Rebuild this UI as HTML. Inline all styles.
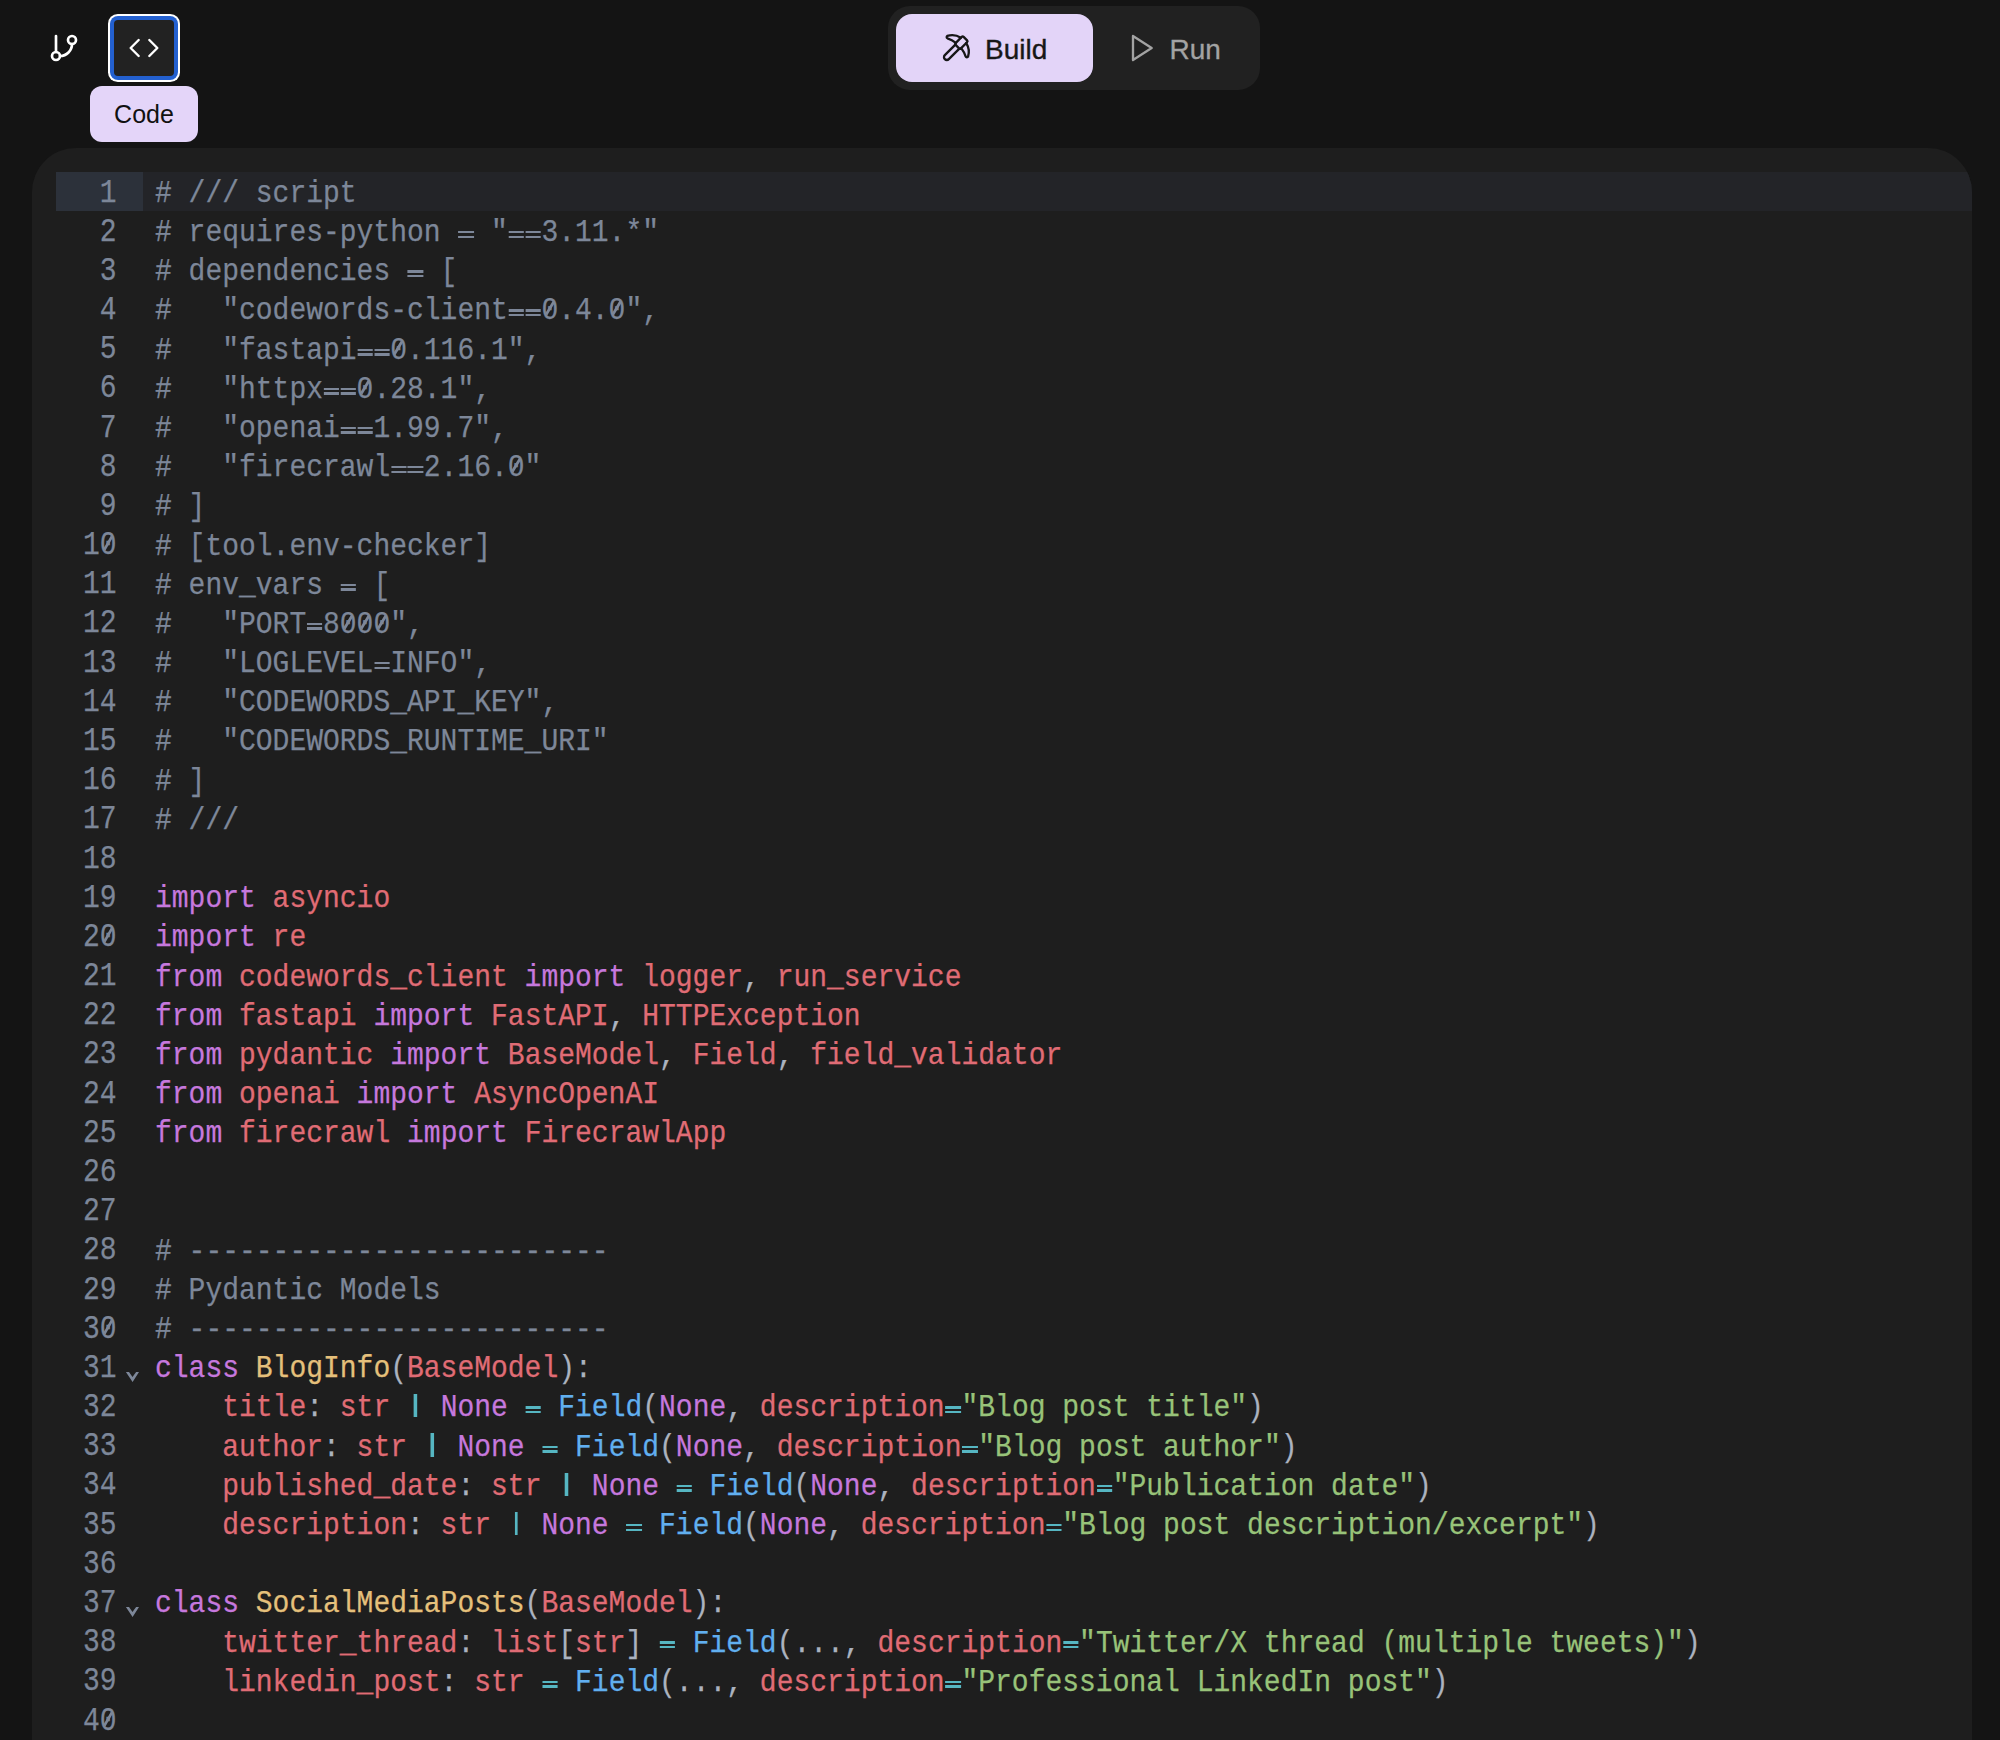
<!DOCTYPE html>
<html><head><meta charset="utf-8"><style>
html,body{margin:0;padding:0;background:#141414;}
body{width:2000px;height:1740px;overflow:hidden;background:#141414;position:relative;font-family:"Liberation Sans",sans-serif;}
.abs{position:absolute;}
#panel{position:absolute;left:32px;top:148px;width:1940px;height:1700px;background:#1e1e1e;border-radius:44px;overflow:hidden;}
#al{position:absolute;left:111px;top:24px;width:1829px;height:39.2px;background:#232428;}
#ag{position:absolute;left:24px;top:24px;width:87px;height:39.2px;background:#2c313a;}
.ln{position:absolute;left:123px;height:39.18px;line-height:39.18px;white-space:pre;font-family:"Liberation Mono",monospace;font-size:31.5px;color:#abb2bf;transform:scaleX(0.88874);transform-origin:0 0;-webkit-text-stroke:0.25px;}
.num{position:absolute;left:24px;width:71.32px;text-align:right;height:39.18px;line-height:39.18px;font-family:"Liberation Mono",monospace;font-size:33px;color:#7d8799;transform:scaleX(0.84835);transform-origin:0 0;-webkit-text-stroke:0.25px;}
.fold{position:absolute;left:92px;}
b{font-weight:normal;}
.bar{color:transparent;-webkit-text-stroke:0;position:relative;} .bar::after{content:'';position:absolute;left:7.65px;top:3.8px;width:3.83px;height:23.2px;background:#56b6c2;}
i.z{font-style:normal;position:relative;} i.eq{font-style:normal;position:relative;color:transparent;-webkit-text-stroke:0;} .c i.eq::before,.c i.eq::after{background:#7d8799;} i.eq::before,i.eq::after{content:'';position:absolute;left:0.90px;width:17.44px;height:2.4px;background:#56b6c2;} i.eq::before{top:15.9px;} i.eq::after{top:20.5px;} .num i.z::after{top:8.20px !important;} i.z::after{content:'';position:absolute;left:50%;top:6.90px;width:3.26px;height:16.0px;margin-left:-1.63px;background:currentColor;transform:rotate(34.00deg);}
.c{color:#7d8799} .k{color:#c678dd} .v{color:#e06c75} .t{color:#e5c07b} .f{color:#61afef} .s{color:#98c379} .o{color:#56b6c2} .p{color:#abb2bf}
#codebtn{position:absolute;left:114px;top:20px;width:60px;height:56px;box-sizing:border-box;background:#222222;border-radius:4px;box-shadow:0 0 0 4px #2360d0, 0 0 0 6px #ffffff;}
#tip{position:absolute;left:90px;top:86px;width:108px;height:56px;background:#e4d5f9;border-radius:12px;color:#111;font-size:25px;line-height:57px;text-align:center;}
#pill{position:absolute;left:888px;top:6px;width:372px;height:84px;background:#212121;border-radius:22px;}
#build{position:absolute;left:896px;top:14px;width:197px;height:68px;background:#e3d4f8;border-radius:16px;}
#buildtxt{position:absolute;left:985px;top:16px;-webkit-text-stroke:0.35px #171717;height:68px;line-height:68px;font-size:28px;color:#171717;}
#runtxt{position:absolute;left:1169.5px;top:16px;-webkit-text-stroke:0.3px #a3a3a3;height:68px;line-height:68px;font-size:28px;color:#a3a3a3;}
</style></head><body>
<svg class="abs" style="left:48px;top:32px" width="32" height="32" viewBox="0 0 24 24" fill="none" stroke="#ffffff" stroke-width="2" stroke-linecap="round" stroke-linejoin="round"><line x1="6" x2="6" y1="3" y2="15"/><circle cx="18" cy="6" r="3"/><circle cx="6" cy="18" r="3"/><path d="M18 9a9 9 0 0 1-9 9"/></svg>
<div id="codebtn"></div>
<svg class="abs" style="left:128px;top:32px" width="32" height="32" viewBox="0 0 24 24" fill="none" stroke="#ffffff" stroke-width="1.8" stroke-linecap="round" stroke-linejoin="round"><polyline points="16 18 22 12 16 6"/><polyline points="8 6 2 12 8 18"/></svg>
<div id="tip">Code</div>
<div id="pill"></div>
<div id="build"></div>
<svg class="abs" style="left:940px;top:32px" width="32" height="32" viewBox="0 0 24 24" fill="none" stroke="#171717" stroke-width="1.75" stroke-linecap="round" stroke-linejoin="round"><path d="M14.531 12.469 6.619 20.38a1 1 0 1 1-3-3l7.912-7.912"/><path d="M15.686 4.314A12.5 12.5 0 0 0 5.461 2.958 1 1 0 0 0 5.58 4.71a22 22 0 0 1 6.318 3.393"/><path d="M17.7 3.7a1 1 0 0 0-1.4 0l-4.6 4.6a1 1 0 0 0 0 1.4l2.6 2.6a1 1 0 0 0 1.4 0l4.6-4.6a1 1 0 0 0 0-1.4z"/><path d="M19.686 8.314a12.501 12.501 0 0 1 1.356 10.225 1 1 0 0 1-1.751-.119 22 22 0 0 0-3.393-6.319"/></svg>
<div id="buildtxt">Build</div>
<svg class="abs" style="left:1125px;top:32px" width="32" height="32" viewBox="0 0 24 24" fill="none" stroke="#a3a3a3" stroke-width="1.75" stroke-linecap="round" stroke-linejoin="round"><polygon points="6 3 20 12 6 21 6 3"/></svg>
<div id="runtxt">Run</div>
<div id="panel">
<div id="al"></div><div id="ag"></div>
<div class="num" style="top:25.50px">1</div><div class="num" style="top:64.68px">2</div><div class="num" style="top:103.86px">3</div><div class="num" style="top:143.04px">4</div><div class="num" style="top:182.22px">5</div><div class="num" style="top:221.40px">6</div><div class="num" style="top:260.58px">7</div><div class="num" style="top:299.76px">8</div><div class="num" style="top:338.94px">9</div><div class="num" style="top:378.12px">1<i class="z">0</i></div><div class="num" style="top:417.30px">11</div><div class="num" style="top:456.48px">12</div><div class="num" style="top:495.66px">13</div><div class="num" style="top:534.84px">14</div><div class="num" style="top:574.02px">15</div><div class="num" style="top:613.20px">16</div><div class="num" style="top:652.38px">17</div><div class="num" style="top:691.56px">18</div><div class="num" style="top:730.74px">19</div><div class="num" style="top:769.92px">2<i class="z">0</i></div><div class="num" style="top:809.10px">21</div><div class="num" style="top:848.28px">22</div><div class="num" style="top:887.46px">23</div><div class="num" style="top:926.64px">24</div><div class="num" style="top:965.82px">25</div><div class="num" style="top:1005.00px">26</div><div class="num" style="top:1044.18px">27</div><div class="num" style="top:1083.36px">28</div><div class="num" style="top:1122.54px">29</div><div class="num" style="top:1161.72px">3<i class="z">0</i></div><div class="num" style="top:1200.90px">31</div><div class="num" style="top:1240.08px">32</div><div class="num" style="top:1279.26px">33</div><div class="num" style="top:1318.44px">34</div><div class="num" style="top:1357.62px">35</div><div class="num" style="top:1396.80px">36</div><div class="num" style="top:1435.98px">37</div><div class="num" style="top:1475.16px">38</div><div class="num" style="top:1514.34px">39</div><div class="num" style="top:1553.52px">4<i class="z">0</i></div>
<svg class="fold" style="top:1222.00px" width="18" height="14" viewBox="0 0 18 14"><polygon points="1.9,1.9 5.0,1.9 8.5,6.9 12.1,1.9 15.0,1.9 8.6,12" fill="#7d8799"/></svg><svg class="fold" style="top:1457.08px" width="18" height="14" viewBox="0 0 18 14"><polygon points="1.9,1.9 5.0,1.9 8.5,6.9 12.1,1.9 15.0,1.9 8.6,12" fill="#7d8799"/></svg>
<div class="ln" style="top:25.90px"><b class="c"># /// script</b></div><div class="ln" style="top:65.08px"><b class="c"># requires-python <i class="eq">=</i> &quot;<i class="eq">=</i><i class="eq">=</i>3.11.*&quot;</b></div><div class="ln" style="top:104.26px"><b class="c"># dependencies <i class="eq">=</i> [</b></div><div class="ln" style="top:143.44px"><b class="c">#   &quot;codewords-client<i class="eq">=</i><i class="eq">=</i><i class="z">0</i>.4.<i class="z">0</i>&quot;,</b></div><div class="ln" style="top:182.62px"><b class="c">#   &quot;fastapi<i class="eq">=</i><i class="eq">=</i><i class="z">0</i>.116.1&quot;,</b></div><div class="ln" style="top:221.80px"><b class="c">#   &quot;httpx<i class="eq">=</i><i class="eq">=</i><i class="z">0</i>.28.1&quot;,</b></div><div class="ln" style="top:260.98px"><b class="c">#   &quot;openai<i class="eq">=</i><i class="eq">=</i>1.99.7&quot;,</b></div><div class="ln" style="top:300.16px"><b class="c">#   &quot;firecrawl<i class="eq">=</i><i class="eq">=</i>2.16.<i class="z">0</i>&quot;</b></div><div class="ln" style="top:339.34px"><b class="c"># ]</b></div><div class="ln" style="top:378.52px"><b class="c"># [tool.env-checker]</b></div><div class="ln" style="top:417.70px"><b class="c"># env_vars <i class="eq">=</i> [</b></div><div class="ln" style="top:456.88px"><b class="c">#   &quot;PORT<i class="eq">=</i>8<i class="z">0</i><i class="z">0</i><i class="z">0</i>&quot;,</b></div><div class="ln" style="top:496.06px"><b class="c">#   &quot;LOGLEVEL<i class="eq">=</i>INFO&quot;,</b></div><div class="ln" style="top:535.24px"><b class="c">#   &quot;CODEWORDS_API_KEY&quot;,</b></div><div class="ln" style="top:574.42px"><b class="c">#   &quot;CODEWORDS_RUNTIME_URI&quot;</b></div><div class="ln" style="top:613.60px"><b class="c"># ]</b></div><div class="ln" style="top:652.78px"><b class="c"># ///</b></div><div class="ln" style="top:691.96px"></div><div class="ln" style="top:731.14px"><b class="k">import</b> <b class="v">asyncio</b></div><div class="ln" style="top:770.32px"><b class="k">import</b> <b class="v">re</b></div><div class="ln" style="top:809.50px"><b class="k">from</b> <b class="v">codewords_client</b> <b class="k">import</b> <b class="v">logger</b><b class="p">,</b> <b class="v">run_service</b></div><div class="ln" style="top:848.68px"><b class="k">from</b> <b class="v">fastapi</b> <b class="k">import</b> <b class="v">FastAPI</b><b class="p">,</b> <b class="v">HTTPException</b></div><div class="ln" style="top:887.86px"><b class="k">from</b> <b class="v">pydantic</b> <b class="k">import</b> <b class="v">BaseModel</b><b class="p">,</b> <b class="v">Field</b><b class="p">,</b> <b class="v">field_validator</b></div><div class="ln" style="top:927.04px"><b class="k">from</b> <b class="v">openai</b> <b class="k">import</b> <b class="v">AsyncOpenAI</b></div><div class="ln" style="top:966.22px"><b class="k">from</b> <b class="v">firecrawl</b> <b class="k">import</b> <b class="v">FirecrawlApp</b></div><div class="ln" style="top:1005.40px"></div><div class="ln" style="top:1044.58px"></div><div class="ln" style="top:1083.76px"><b class="c"># -------------------------</b></div><div class="ln" style="top:1122.94px"><b class="c"># Pydantic Models</b></div><div class="ln" style="top:1162.12px"><b class="c"># -------------------------</b></div><div class="ln" style="top:1201.30px"><b class="k">class</b> <b class="t">BlogInfo</b><b class="p">(</b><b class="v">BaseModel</b><b class="p">):</b></div><div class="ln" style="top:1240.48px">    <b class="v">title</b><b class="p">:</b> <b class="v">str</b> <b class="bar">|</b> <b class="k">None</b> <b class="o"><i class="eq">=</i></b> <b class="f">Field</b><b class="p">(</b><b class="k">None</b><b class="p">,</b> <b class="v">description</b><b class="o"><i class="eq">=</i></b><b class="s">&quot;Blog post title&quot;</b><b class="p">)</b></div><div class="ln" style="top:1279.66px">    <b class="v">author</b><b class="p">:</b> <b class="v">str</b> <b class="bar">|</b> <b class="k">None</b> <b class="o"><i class="eq">=</i></b> <b class="f">Field</b><b class="p">(</b><b class="k">None</b><b class="p">,</b> <b class="v">description</b><b class="o"><i class="eq">=</i></b><b class="s">&quot;Blog post author&quot;</b><b class="p">)</b></div><div class="ln" style="top:1318.84px">    <b class="v">published_date</b><b class="p">:</b> <b class="v">str</b> <b class="bar">|</b> <b class="k">None</b> <b class="o"><i class="eq">=</i></b> <b class="f">Field</b><b class="p">(</b><b class="k">None</b><b class="p">,</b> <b class="v">description</b><b class="o"><i class="eq">=</i></b><b class="s">&quot;Publication date&quot;</b><b class="p">)</b></div><div class="ln" style="top:1358.02px">    <b class="v">description</b><b class="p">:</b> <b class="v">str</b> <b class="bar">|</b> <b class="k">None</b> <b class="o"><i class="eq">=</i></b> <b class="f">Field</b><b class="p">(</b><b class="k">None</b><b class="p">,</b> <b class="v">description</b><b class="o"><i class="eq">=</i></b><b class="s">&quot;Blog post description/excerpt&quot;</b><b class="p">)</b></div><div class="ln" style="top:1397.20px"></div><div class="ln" style="top:1436.38px"><b class="k">class</b> <b class="t">SocialMediaPosts</b><b class="p">(</b><b class="v">BaseModel</b><b class="p">):</b></div><div class="ln" style="top:1475.56px">    <b class="v">twitter_thread</b><b class="p">:</b> <b class="v">list</b><b class="p">[</b><b class="v">str</b><b class="p">]</b> <b class="o"><i class="eq">=</i></b> <b class="f">Field</b><b class="p">(</b><b class="p">...</b><b class="p">,</b> <b class="v">description</b><b class="o"><i class="eq">=</i></b><b class="s">&quot;Twitter/X thread (multiple tweets)&quot;</b><b class="p">)</b></div><div class="ln" style="top:1514.74px">    <b class="v">linkedin_post</b><b class="p">:</b> <b class="v">str</b> <b class="o"><i class="eq">=</i></b> <b class="f">Field</b><b class="p">(</b><b class="p">...</b><b class="p">,</b> <b class="v">description</b><b class="o"><i class="eq">=</i></b><b class="s">&quot;Professional LinkedIn post&quot;</b><b class="p">)</b></div><div class="ln" style="top:1553.92px"></div>
</div>
</body></html>
